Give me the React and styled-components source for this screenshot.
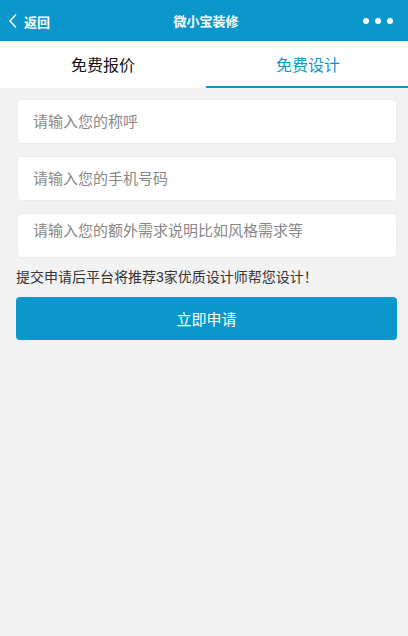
import React from 'react'
import styled, { createGlobalStyle } from 'styled-components'

const GlobalStyle = createGlobalStyle`
  html, body {
    margin: 0;
    padding: 0;
    background: #f2f2f2;
    font-family: "Liberation Sans", "Noto Sans CJK SC", sans-serif;
  }
  * { box-sizing: border-box; }
`

const App = () => {
  return (
    <Page>
      <GlobalStyle />
      <Header>
        <Back>
          <svg width="10" height="16" viewBox="0 0 10 16">
            <path d="M8 1.5 L2 8 L8 14.5" fill="none" stroke="#fff" strokeWidth="1.4" />
          </svg>
          <span>返回</span>
        </Back>
        <Title>微小宝装修</Title>
        <Dots>
          <i /><i /><i />
        </Dots>
      </Header>
      <Tabs>
        <Tab>免费报价</Tab>
        <Tab active>免费设计</Tab>
      </Tabs>
      <Form>
        <Field placeholder="请输入您的称呼" />
        <Field placeholder="请输入您的手机号码" />
        <Area placeholder="请输入您的额外需求说明比如风格需求等" />
        <Note>提交申请后平台将推荐3家优质设计师帮您设计！</Note>
        <Submit>立即申请</Submit>
      </Form>
    </Page>
  )
}

export default App

const Page = styled.div`
  min-height: 636px;
  background: #f2f2f2;
`
const Header = styled.div`
  height: 41px;
  background: #0b97cb;
  display: grid;
  grid-template-columns: 1fr auto 1fr;
  align-items: center;
  padding: 0 8px;
  color: #fff;
`
const Back = styled.div`
  display: flex;
  align-items: center;
  gap: 6px;
  font-size: 13px;
  font-weight: bold;
  span { margin-top: 1px; }
`
const Title = styled.div`
  font-size: 13px;
  font-weight: bold;
  margin-left: 4px;
`
const Dots = styled.div`
  justify-self: end;
  display: flex;
  gap: 6px;
  padding-right: 7px;
  i {
    width: 6px;
    height: 6px;
    border-radius: 50%;
    background: #fff;
  }
`
const Tabs = styled.div`
  display: grid;
  grid-template-columns: 206px 1fr;
  background: #fff;
  height: 47px;
`
const Tab = styled.div`
  display: flex;
  align-items: center;
  justify-content: center;
  font-size: 16px;
  color: ${p => (p.active ? '#0b97cb' : '#111')};
  border-bottom: 2px solid ${p => (p.active ? '#0b97cb' : 'transparent')};
  padding: 1px 0 0 ${p => (p.active ? '2px' : '0')};
`
const Form = styled.div`
  display: flex;
  flex-direction: column;
  padding: 11px 11px 0 16px;
`
const Field = styled.input`
  height: 45px;
  margin: 0 0 12px 1px;
  border: 1px solid #ebebeb;
  border-radius: 4px;
  background: #fff;
  padding: 0 15px;
  font-family: inherit;
  font-size: 15px;
  outline: none;
  &::placeholder { color: #888; }
`
const Area = styled.textarea`
  height: 45px;
  margin: 0 0 0 1px;
  border: 1px solid #ebebeb;
  border-radius: 4px;
  background: #fff;
  padding: 5px 15px;
  font-family: inherit;
  font-size: 15px;
  resize: none;
  outline: none;
  &::placeholder { color: #888; }
`
const Note = styled.div`
  font-size: 14px;
  color: #333;
  margin: 9px 0 10px 0;
  line-height: 20px;
`
const Submit = styled.button`
  height: 43px;
  border: none;
  border-radius: 4px;
  background: #0b97cb;
  color: #fff;
  font-family: inherit;
  font-size: 15px;
`
